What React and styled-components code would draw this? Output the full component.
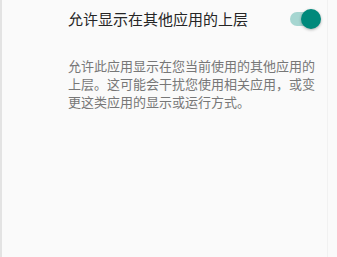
import React, { useState } from 'react';
import styled, { createGlobalStyle } from 'styled-components';

const GlobalStyle = createGlobalStyle`
  html, body {
    margin: 0;
    padding: 0;
    background-color: #fafafa;
  }
  body {
    font-family: Roboto, "Noto Sans CJK SC", sans-serif;
  }
`;

const Screen = styled.div`
  height: 257px;
  width: 337px;
  box-sizing: border-box;
  border-left: 2px solid #e3e3e3;
  display: flex;
`;

const Panel = styled.section`
  width: 326px;
  box-sizing: border-box;
  border-right: 1px solid #f1f1f1;
  padding: 0 10px 0 66px;
`;

const Row = styled.div`
  display: flex;
  align-items: center;
  justify-content: space-between;
  height: 37px;
`;

const Title = styled.h1`
  margin: 0;
  font-size: 15px;
  font-weight: 400;
  color: #262626;
  font-family: Roboto, "Noto Sans CJK SC", sans-serif;
`;

const Track = styled.button`
  position: relative;
  width: 29px;
  height: 14px;
  margin-right: -2px;
  padding: 0;
  border: none;
  border-radius: 7px;
  cursor: pointer;
  background-color: ${props => (props.on ? '#a6d6d1' : '#bdbdbd')};
`;

const Thumb = styled.span`
  position: absolute;
  top: -3px;
  left: ${props => (props.on ? '11px' : '-2px')};
  width: 20px;
  height: 20px;
  border-radius: 50%;
  background-color: ${props => (props.on ? '#00897b' : '#f1f1f1')};
  box-shadow: 0 1px 3px rgba(0, 0, 0, 0.3);
`;

const Summary = styled.p`
  margin: 21px 0 0;
  width: 250px;
  font-size: 13px;
  line-height: 18px;
  color: #777777;
  font-family: Roboto, "Noto Sans CJK SC", sans-serif;
`;

export default function App() {
  const [on, setOn] = useState(true);

  return (
    <Screen>
      <GlobalStyle />
      <Panel>
        <Row>
          <Title>允许显示在其他应用的上层</Title>
          <Track on={on} onClick={() => setOn(!on)}>
            <Thumb on={on} />
          </Track>
        </Row>
        <Summary>
          允许此应用显示在您当前使用的其他应用的上层。这可能会干扰您使用相关应用，或变更这类应用的显示或运行方式。
        </Summary>
      </Panel>
    </Screen>
  );
}
